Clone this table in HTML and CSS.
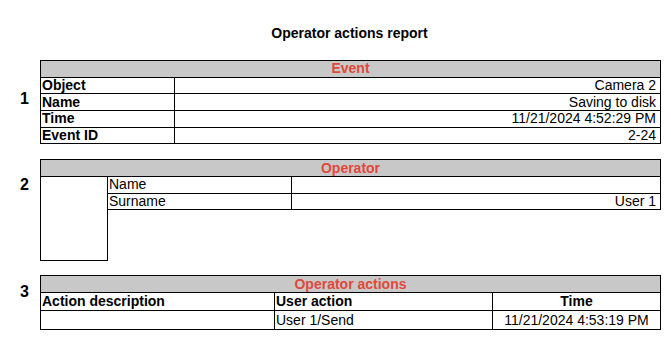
FILE: index.html
```html
<!DOCTYPE html>
<html>
<head>
<meta charset="utf-8">
<link rel="stylesheet" href="styles.css">
</head>
<body>
<div class="page">
  <div class="title">Operator actions report</div>

  <div class="section section-event">
    <div class="num num-1">1</div>
    <table class="grid">
      <colgroup><col class="c-label"><col></colgroup>
      <tr class="r-head"><th colspan="2" class="head">Event</th></tr>
      <tr class="r-row"><td class="lbl">Object</td><td class="val">Camera 2</td></tr>
      <tr class="r-row"><td class="lbl">Name</td><td class="val">Saving to disk</td></tr>
      <tr class="r-row"><td class="lbl">Time</td><td class="val">11/21/2024 4:52:29 PM</td></tr>
      <tr class="r-row"><td class="lbl">Event ID</td><td class="val">2-24</td></tr>
    </table>
  </div>

  <div class="section section-operator">
    <div class="num num-2">2</div>
    <table class="grid">
      <colgroup><col class="c-photo"><col class="c-field"><col></colgroup>
      <tr class="r-head"><th colspan="3" class="head">Operator</th></tr>
      <tr class="r-row"><td rowspan="3" class="photo"></td><td class="plain">Name</td><td class="val"></td></tr>
      <tr class="r-row"><td class="plain">Surname</td><td class="val">User 1</td></tr>
      <tr class="r-blank"><td colspan="2" class="blank"></td></tr>
    </table>
  </div>

  <div class="section section-actions">
    <div class="num num-3">3</div>
    <table class="grid">
      <colgroup><col class="c-desc"><col class="c-action"><col></colgroup>
      <tr class="r-head2"><th colspan="3" class="head">Operator actions</th></tr>
      <tr class="r-colhead"><td class="lbl">Action description</td><td class="lbl">User action</td><td class="lbl center">Time</td></tr>
      <tr class="r-data"><td class="plain"></td><td class="plain">User 1/Send</td><td class="plain center">11/21/2024 4:53:19 PM</td></tr>
    </table>
  </div>
</div>
</body>
</html>
```

FILE: styles.css
```css
html, body {
  margin: 0;
  padding: 0;
  background: #ffffff;
}

body {
  font-family: "Liberation Sans", Arial, sans-serif;
  color: #000000;
  font-size: 14px;
}

.page {
  width: 671px;
  padding-top: 25px;
  display: flex;
  flex-direction: column;
}

.title {
  font-weight: bold;
  font-size: 14px;
  line-height: 16px;
  text-align: center;
  padding-left: 28px;
  margin-bottom: 19px;
}

.section {
  display: flex;
  align-items: flex-start;
}

.section-event { margin-bottom: 15px; }
.section-operator { margin-bottom: 14px; }

.num {
  width: 40px;
  box-sizing: border-box;
  padding-left: 20px;
  font-weight: bold;
  font-size: 16px;
  line-height: 16px;
}

.num-1 { padding-top: 31px; }
.num-2 { padding-top: 18px; }
.num-3 { padding-top: 9px; }

.grid {
  border-collapse: collapse;
  width: 621px;
  table-layout: fixed;
}

.grid td, .grid th {
  border: 1px solid #000000;
  padding: 0 1px;
  line-height: 15px;
  white-space: nowrap;
  overflow: hidden;
}

.c-label { width: 134px; }
.c-photo { width: 67px; }
.c-field { width: 184px; }
.c-desc { width: 234px; }
.c-action { width: 218px; }

.head {
  background: #c8c8c8;
  color: #e0483a;
  font-weight: bold;
  text-align: center;
}

.r-head { height: 16.67px; }
.r-row { height: 16.67px; }
.r-blank { height: 51px; }
.r-head2 { height: 16.5px; }
.r-colhead { height: 18px; }
.r-data { height: 19.5px; }

.lbl {
  font-weight: bold;
  text-align: left;
}

.plain {
  font-weight: normal;
  text-align: left;
}

.val {
  text-align: right;
  padding-right: 4px !important;
}

.center { text-align: center; }

.grid td.blank {
  border-left: none;
  border-right: none;
  border-bottom: none;
}
```
